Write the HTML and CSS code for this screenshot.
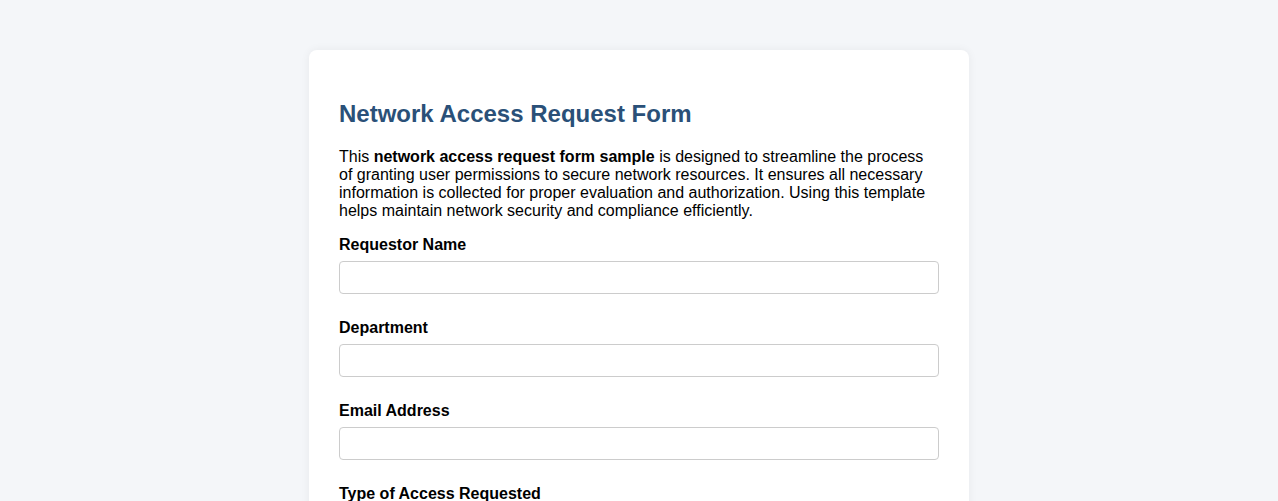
FILE: index.html
```html
<!DOCTYPE html>
<html lang="en">
<head>
<meta charset="utf-8">
<title>Network Access Request Form</title>
<link rel="stylesheet" href="styles.css">
</head>
<body>
<div class="container">
  <h1 class="title">Network Access Request Form</h1>
  <p class="intro">This <strong>network access request form sample</strong> is designed to streamline the process of granting user permissions to secure network resources. It ensures all necessary information is collected for proper evaluation and authorization. Using this template helps maintain network security and compliance efficiently.</p>
  <form class="form">
    <div class="group">
      <label class="label" for="name">Requestor Name</label>
      <input class="field" id="name" type="text">
    </div>
    <div class="group">
      <label class="label" for="dept">Department</label>
      <input class="field" id="dept" type="text">
    </div>
    <div class="group">
      <label class="label" for="email">Email Address</label>
      <input class="field" id="email" type="email">
    </div>
    <div class="group">
      <label class="label" for="type">Type of Access Requested</label>
      <input class="field" id="type" type="text">
    </div>
  </form>
</div>
</body>
</html>
```
FILE: styles.css
```css
html, body {
  margin: 0;
  padding: 0;
}
body {
  background: #f4f6f9;
  font-family: "Liberation Sans", Arial, sans-serif;
  color: #000;
  padding: 50px 0;
}
.container {
  width: 600px;
  margin: 0 auto;
  background: #fff;
  padding: 30px;
  border-radius: 8px;
  box-shadow: 0 0 10px rgba(0, 0, 0, 0.06);
}
.title {
  color: #2a5078;
  font-size: 24px;
  margin: 20px 0 20px;
}
.intro {
  font-size: 16px;
  margin: 0 0 16px;
}
.group {
  margin-bottom: 25px;
}
.label {
  display: block;
  font-weight: bold;
  font-size: 16px;
  margin-bottom: 7px;
}
.field {
  display: block;
  width: 100%;
  box-sizing: border-box;
  padding: 8px;
  font-family: "Liberation Sans", Arial, sans-serif;
  font-size: 13.33px;
  border: 1px solid #ccc;
  border-radius: 4px;
  background: #fff;
}
```
